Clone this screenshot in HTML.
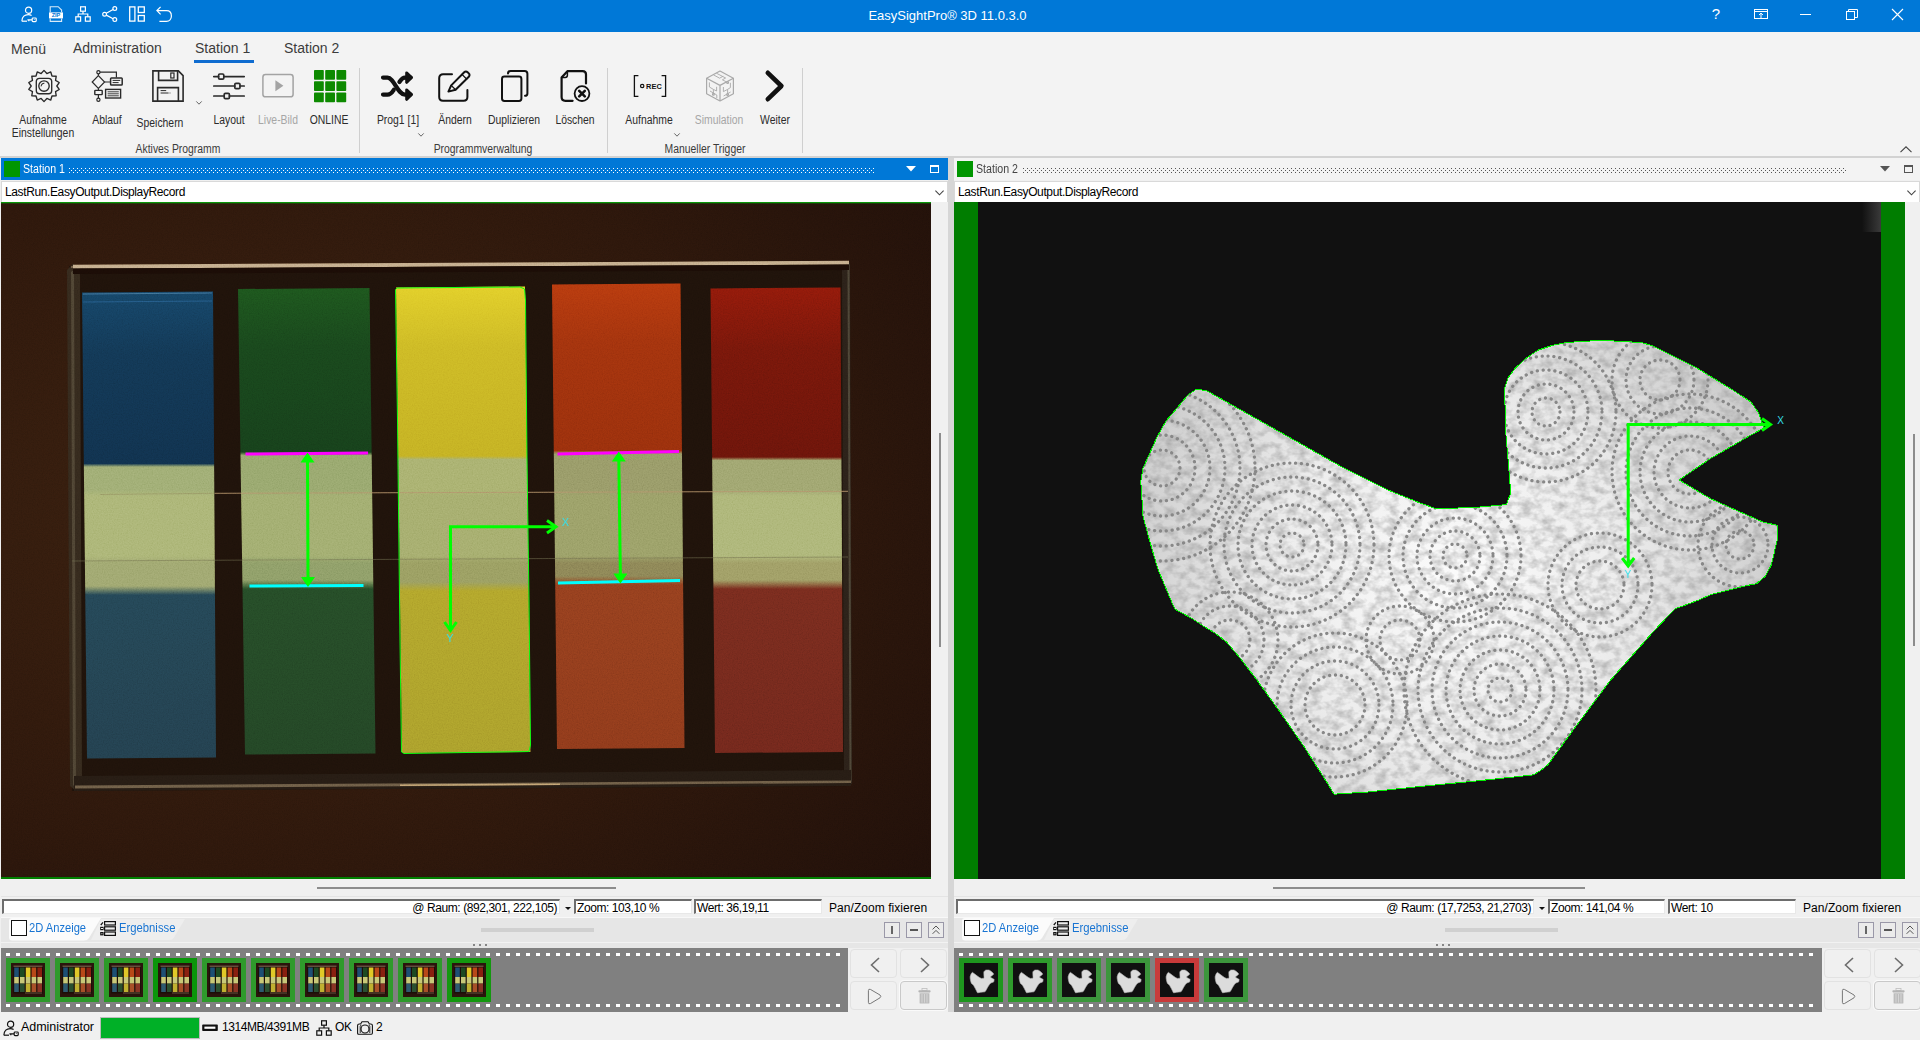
<!DOCTYPE html>
<html lang="de">
<head>
<meta charset="utf-8">
<title>EasySightPro 3D</title>
<style>
*{box-sizing:border-box;margin:0;padding:0}
html,body{width:1920px;height:1040px;overflow:hidden;background:#f0f0f0}
body{position:relative;font-family:"Liberation Sans",sans-serif;font-size:12px;color:#1e1e1e}
.abs{position:absolute}
svg{position:absolute;overflow:visible}
#title{left:0;top:0;width:1920px;height:32px;background:#0078d7}
#title .cap{left:0;top:8px;width:1895px;text-align:center;color:#fff;font-size:13px;line-height:16px}
#tabs{left:0;top:32px;width:1920px;height:32px;background:#f3f3f3}
#tabs span{position:absolute;top:8px;font-size:14px;line-height:16px;color:#3b3b3b;white-space:nowrap}
#ribbon{left:0;top:64px;width:1920px;height:92px;background:#f3f3f3}
.rl{position:absolute;white-space:nowrap;font-size:12px;line-height:13px;color:#2b2b2b;text-align:center;transform:translateX(-50%) scaleX(0.865)}
.rl.dis{color:#a6a6a6}
.gl{position:absolute;white-space:nowrap;font-size:12px;line-height:14px;color:#3b3b3b;transform:translateX(-50%) scaleX(0.865)}
.sep{position:absolute;top:4px;width:1px;height:85px;background:#cfcfcf}
.ui{font-family:"Liberation Sans",sans-serif;font-size:12px;letter-spacing:-0.42px;color:#000;white-space:nowrap}
.hdr{height:22px;top:158px}
.hdr .sq{position:absolute;left:3px;top:3px;width:16px;height:16px;background:#009600}
.hdr .t{position:absolute;top:4px;font-size:12px;line-height:14px;white-space:nowrap}
.dd{top:181px;height:21px;background:#fff;border:1px solid #d9d9d9;border-bottom:none}
.dd .t{position:absolute;left:3px;top:3px;line-height:14px}
.film{background:#808080;top:948px;height:64px}
.th{position:absolute;top:10px;width:44px;height:44px;background:#2d9a2a;overflow:hidden}
.btn{position:absolute;width:47px;height:29px;border:1px solid #e2e2e2;border-radius:4px;background:#f0f0f0}
.sb{position:absolute;top:922px;width:16px;height:16px;border:1px solid #9a98a8;background:#ebebeb}
.box{position:absolute;top:899px;height:15px;background:#fff;border-top:2px solid #6d6d6d;border-left:2px solid #6d6d6d;border-right:1px solid #e8e8e8;border-bottom:1px solid #e8e8e8}
.box span,.lbl{position:absolute;top:0.5px;line-height:13px}
</style>
</head>
<body>
<div id="title" class="abs">
 <svg style="left:21px;top:6px" width="16" height="16" viewBox="0 0 16 16" fill="none" stroke="#fff" stroke-width="1.2"><circle cx="7.6" cy="4.2" r="3.1"/><path d="M0.9 15.2 C0.9 10.8 3.8 8.6 7.2 8.6 C8.6 8.6 9.8 9 10.6 9.6"/><path d="M0.9 15.2 H6"/><rect x="11.2" y="12" width="4" height="3.6" rx="0.8"/><path d="M11 13.8 H6.4 M7.8 13.8 V15.2 M13.4 13.5v.6"/></svg>
 <svg style="left:48px;top:6px" width="16" height="16" viewBox="0 0 16 16" fill="none" stroke="#fff" stroke-width="1.1"><path d="M2.2 6.2 V0.7 H10.2 L13.6 4 V6.2 M2.2 12.6 V15.4 H13.6 V12.6" opacity=".85"/><rect x="1" y="6.4" width="14" height="6" fill="#fff" stroke="none"/><text x="8" y="11.4" font-family="Liberation Sans,sans-serif" font-size="5.6" font-weight="bold" fill="#0078d7" stroke="none" text-anchor="middle">ZIP</text></svg>
 <svg style="left:75px;top:6px" width="16" height="16" viewBox="0 0 16 16" fill="none" stroke="#fff" stroke-width="1.2"><rect x="5.6" y="0.8" width="4.8" height="4.4"/><rect x="0.8" y="10.8" width="4.8" height="4.4"/><rect x="10.4" y="10.8" width="4.8" height="4.4"/><path d="M8 5.2 V8 M3.2 10.8 V8 H12.8 V10.8"/></svg>
 <svg style="left:102px;top:6px" width="16" height="16" viewBox="0 0 16 16" fill="none" stroke="#fff" stroke-width="1.2"><circle cx="12.8" cy="2.6" r="1.9"/><circle cx="2.6" cy="8.2" r="1.9"/><circle cx="12.8" cy="13.6" r="1.9"/><path d="M4.3 7.3 L11.1 3.5 M4.3 9.1 L11.1 12.7"/></svg>
 <svg style="left:129px;top:6px" width="16" height="16" viewBox="0 0 16 16" fill="none" stroke="#fff" stroke-width="1.3"><rect x="0.7" y="0.9" width="5.2" height="14.2"/><rect x="9.3" y="0.9" width="6" height="5.6"/><rect x="9.3" y="9.5" width="6" height="5.6"/></svg>
 <svg style="left:156px;top:6px" width="16" height="16" viewBox="0 0 16 16" fill="none" stroke="#fff" stroke-width="1.2"><path d="M4.6 0.9 L0.9 4.6 L4.6 8.3 M0.9 4.6 H10.6 C13.6 4.6 15.4 6.8 15.4 9.9 C15.4 13 13.4 15.3 10.4 15.3 H3.4"/></svg>
 <div class="abs cap">EasySightPro® 3D 11.0.3.0</div>
 <div class="abs" style="left:1711px;top:5px;color:#fff;font-size:15px;line-height:18px;width:10px;text-align:center">?</div>
 <svg style="left:1754px;top:9px" width="14" height="10" viewBox="0 0 14 10" fill="none" stroke="#fff" stroke-width="1"><rect x="0.5" y="0.5" width="13" height="9"/><path d="M0.5 2.5 H13.5 M7 9 V4.2 M5 6 L7 4.2 L9 6"/></svg>
 <div class="abs" style="left:1800px;top:14px;width:11px;height:1px;background:#fff"></div>
 <svg style="left:1846px;top:9px" width="12" height="11" viewBox="0 0 12 11" fill="none" stroke="#fff" stroke-width="1"><rect x="0.5" y="2.5" width="8" height="8"/><path d="M2.5 2.5 V0.5 H11.5 V8.5 H8.5"/></svg>
 <svg style="left:1892px;top:9px" width="11" height="11" viewBox="0 0 11 11" fill="none" stroke="#fff" stroke-width="1.1"><path d="M0 0 L11 11 M11 0 L0 11"/></svg>
</div>

<div id="tabs" class="abs">
 <span style="left:11px;top:9px">Menü</span>
 <span style="left:73px">Administration</span>
 <span style="left:195px">Station 1</span>
 <span style="left:284px">Station 2</span>
 <div class="abs" style="left:194px;top:28px;width:60px;height:3px;background:#0f6cd0"></div>
</div>

<div id="ribbon" class="abs">
<svg style="left:28px;top:6px" width="32" height="32" viewBox="0 0 32 32" fill="none" stroke="#2a2a2a" stroke-width="1.35" stroke-linejoin="round"><path d="M16.00 0.40 L18.85 3.52 L22.77 1.94 L23.98 5.99 L28.20 6.27 L27.53 10.45 L31.21 12.53 L28.80 16.00 L31.21 19.47 L27.53 21.55 L28.20 25.73 L23.98 26.01 L22.77 30.06 L18.85 28.48 L16.00 31.60 L13.15 28.48 L9.23 30.06 L8.02 26.01 L3.80 25.73 L4.47 21.55 L0.79 19.47 L3.20 16.00 L0.79 12.53 L4.47 10.45 L3.80 6.27 L8.02 5.99 L9.23 1.94 L13.15 3.52Z"/><rect x="8.3" y="8.3" width="15.4" height="15.4" rx="3.2"/><circle cx="16" cy="16" r="5.2"/><path d="M13.2 16.4 A3 3 0 0 1 16.4 13.2" stroke-width="1.1"/></svg>
<svg style="left:91px;top:6px" width="32" height="32" viewBox="0 0 32 32" fill="none" stroke="#2a2a2a" stroke-width="1.2"><circle cx="7.4" cy="2.2" r="1.6"/><path d="M9 2.2 H25.4 V7.6 M7.4 3.8 V5.6 M7.4 18.4 V20.4 M7.4 24.6 V28.2 M13.6 12 H19.4"/><path d="M7.4 5.6 L13.6 12 L7.4 18.4 L1.2 12 Z"/><rect x="19.6" y="8" width="11.6" height="7" rx="0.8" stroke-width="1.5"/><path d="M21.6 10.4 H29.2 M21.6 12.6 H27.6" stroke-width="1"/><rect x="3.8" y="20.4" width="7.4" height="4.2" rx="0.6" stroke-width="1.4"/><circle cx="7.4" cy="29.8" r="1.6"/><rect x="14.6" y="19.4" width="15" height="8.6" stroke-width="1.4"/><path d="M16.6 21.8 H27.8 M16.6 23.8 H27.8 M16.6 25.8 H27.8" stroke-width="0.9"/></svg>
<svg style="left:152px;top:6px" width="32" height="32" viewBox="0 0 32 32" fill="none" stroke="#2a2a2a" stroke-width="1.6" stroke-linejoin="miter"><path d="M0.9 0.9 H26.4 L31.1 5.6 V31.1 H0.9 Z"/><path d="M6.6 0.9 V10.4 H25.6 V0.9"/><rect x="18.8" y="3" width="3.2" height="5" stroke-width="1.2"/><path d="M5.6 31 V17.6 H26.4 V31"/><path d="M8.6 20.6 H14.2 M8.6 23 H16.6 M17.6 23 H18.4" stroke-width="1"/></svg>
<svg style="left:196px;top:36.5px" width="6" height="4" viewBox="0 0 6 4" fill="none" stroke="#555" stroke-width="0.9"><path d="M0.3 0.4 L3 3.2 L5.7 0.4"/></svg>
<svg style="left:213px;top:6px" width="32" height="32" viewBox="0 0 32 32" fill="none" stroke="#2a2a2a" stroke-width="1.7" stroke-linecap="round"><path d="M0.8 6.6 H5.6 M10.8 6.6 H31.2 M0.8 16 H21.8 M27 16 H31.2 M0.8 26 H11.2 M16.4 26 H31.2"/><rect x="5.6" y="4" width="5.2" height="5.2" rx="1.2"/><rect x="21.8" y="13.4" width="5.2" height="5.2" rx="1.2"/><rect x="11.2" y="23.4" width="5.2" height="5.2" rx="1.2"/></svg>
<svg style="left:262px;top:6px" width="32" height="32" viewBox="0 0 32 32" fill="none" stroke="#a3a3a3" stroke-width="1.5"><rect x="0.9" y="4.6" width="30.2" height="22.2" rx="2.6"/><path d="M13.4 10.2 L21.4 15.7 L13.4 21.2 Z" fill="#a3a3a3" stroke="none"/></svg>
<svg style="left:314px;top:6px" width="32" height="32" viewBox="0 0 32 32" fill="#0d8a00"><rect x="0.0" y="0.0" width="9.8" height="9.8" rx="0.8"/><rect x="11.2" y="0.0" width="9.8" height="9.8" rx="0.8"/><rect x="22.4" y="0.0" width="9.8" height="9.8" rx="0.8"/><rect x="0.0" y="11.2" width="9.8" height="9.8" rx="0.8"/><rect x="11.2" y="11.2" width="9.8" height="9.8" rx="0.8"/><rect x="22.4" y="11.2" width="9.8" height="9.8" rx="0.8"/><rect x="0.0" y="22.4" width="9.8" height="9.8" rx="0.8"/><rect x="11.2" y="22.4" width="9.8" height="9.8" rx="0.8"/><rect x="22.4" y="22.4" width="9.8" height="9.8" rx="0.8"/></svg>
<svg style="left:381px;top:6px" width="33" height="32" viewBox="0 0 33 32" fill="none" stroke="#111" stroke-width="4.2" stroke-linecap="round" stroke-linejoin="round"><path d="M2 7.6 H6.5 C13 7.6 16.5 24.6 24 24.6 H29.5"/><path d="M2 24.6 H6.5 C9.2 24.6 11 22.6 12.8 19.8 M18.4 12 C20 9.6 21.6 7.6 24 7.6 H29.5"/><path d="M25.6 2.8 L30.6 7.6 L25.6 12.4 Z M25.6 19.8 L30.6 24.6 L25.6 29.4 Z" fill="#111" stroke-width="2.8"/></svg>
<svg style="left:418px;top:68.5px" width="6" height="4" viewBox="0 0 6 4" fill="none" stroke="#555" stroke-width="0.9"><path d="M0.3 0.4 L3 3.2 L5.7 0.4"/></svg>
<svg style="left:438px;top:6px" width="33" height="32" viewBox="0 0 33 32" fill="none" stroke="#111" stroke-width="2" stroke-linecap="round" stroke-linejoin="round"><path d="M14 4.2 H5 C2.8 4.2 1.2 5.8 1.2 8 V27 C1.2 29.2 2.8 30.8 5 30.8 H25.6 C27.8 30.8 29.4 29.2 29.4 27 V20"/><path d="M10.4 21.6 L13.2 15.4 L26.2 2.2 C27.2 1.2 28.6 1.2 29.6 2.2 L30.8 3.4 C31.8 4.4 31.8 5.8 30.8 6.8 L17.6 19.8 Z"/><path d="M13.2 15.4 L17.6 19.8 M24 4.4 L28.6 9" stroke-width="1.3"/></svg>
<svg style="left:501px;top:6px" width="28" height="32" viewBox="0 0 28 32" fill="none" stroke="#111" stroke-width="2" stroke-linejoin="round" stroke-linecap="round"><rect x="1" y="6.6" width="19.4" height="24.4" rx="2.4"/><path d="M7 3.6 C7 2 8 1 9.6 1 H23.6 C25.4 1 26.4 2 26.4 3.8 V23.4 C26.4 25 25.6 25.8 24 25.8"/></svg>
<svg style="left:560px;top:6px" width="32" height="32" viewBox="0 0 32 32" fill="none" stroke="#111" stroke-width="2.2" stroke-linejoin="round" stroke-linecap="round"><path d="M12.6 30.8 H5.4 C3.2 30.8 1.6 29.2 1.6 27 V7.6 L7.4 1.2 H22.6 C24.6 1.2 26 2.6 26 4.6 V13.4"/><path d="M1.8 7.4 H5.2 C6.6 7.4 7.4 6.6 7.4 5.2 V1.4" stroke-width="1.5"/><circle cx="22" cy="23.6" r="7.4" stroke-width="1.8"/><path d="M19.2 20.8 L24.8 26.4 M24.8 20.8 L19.2 26.4" stroke-width="2.6"/></svg>
<svg style="left:633px;top:6px" width="34" height="32" viewBox="0 0 34 32" fill="none" stroke="#111" stroke-width="1.3"><path d="M5.4 5.6 H1.4 V26.4 H5.4 M28.6 5.6 H32.6 V26.4 H28.6"/><circle cx="9.2" cy="16" r="1.7" stroke-width="1.2"/><text x="13" y="18.9" font-family="Liberation Sans,sans-serif" font-size="7.4" font-weight="bold" fill="#111" stroke="none" letter-spacing="0.1">REC</text></svg>
<svg style="left:673.5px;top:68.5px" width="6" height="4" viewBox="0 0 6 4" fill="none" stroke="#555" stroke-width="0.9"><path d="M0.3 0.4 L3 3.2 L5.7 0.4"/></svg>
<svg style="left:705px;top:6px" width="30" height="32" viewBox="0 0 30 32" fill="none" stroke="#a9a9a9" stroke-width="1.2" stroke-linejoin="round"><path d="M15 1 L28.4 8.2 V23.8 L15 31 L1.6 23.8 V8.2 Z"/><path d="M1.6 8.2 L15 15.4 L28.4 8.2 M15 15.4 V31"/><path d="M8.4 4.8 L14.6 8.2 L18.2 6.2 M11.4 3.2 L20.6 8 L17.4 9.8 L22 12.2" stroke-width="0.9"/><path d="M4.4 12.4 V17 L8.4 19.4 V23.4 M11.6 16.8 V21 L8.4 19.4 M5 21 L11.8 25 V28" stroke-width="0.9"/><path d="M18.4 17 V21.6 L22.6 19.4 V23.6 M25.4 12.8 V17.6 L22.6 19.4 M18.6 26 L25.6 22" stroke-width="0.9"/><circle cx="8.4" cy="24.2" r="0.9"/><circle cx="22.6" cy="24.4" r="0.9"/><circle cx="22.6" cy="12.6" r="0.9"/></svg>
<svg style="left:765px;top:6px" width="20" height="32" viewBox="0 0 20 32" fill="none" stroke="#111" stroke-width="4.6" stroke-linecap="round" stroke-linejoin="round"><path d="M2.8 2.8 L16.4 16 L2.8 29.2"/></svg>
<div class="rl" style="left:43px;top:50px">Aufnahme<br>Einstellungen</div>
<div class="rl" style="left:106.5px;top:50px">Ablauf</div>
<div class="rl" style="left:159.5px;top:53px">Speichern</div>
<div class="rl" style="left:228.5px;top:50px">Layout</div>
<div class="rl dis" style="left:277.5px;top:50px">Live-Bild</div>
<div class="rl" style="left:328.5px;top:50px">ONLINE</div>
<div class="rl" style="left:397.5px;top:50px">Prog1 [1]</div>
<div class="rl" style="left:454.5px;top:50px">Ändern</div>
<div class="rl" style="left:513.5px;top:50px">Duplizieren</div>
<div class="rl" style="left:575px;top:50px">Löschen</div>
<div class="rl" style="left:648.5px;top:50px">Aufnahme</div>
<div class="rl dis" style="left:719px;top:50px">Simulation</div>
<div class="rl" style="left:774.5px;top:50px">Weiter</div>
<div class="gl" style="left:178px;top:78px">Aktives Programm</div>
<div class="gl" style="left:483px;top:78px">Programmverwaltung</div>
<div class="gl" style="left:705px;top:78px">Manueller Trigger</div>
<div class="sep" style="left:359px"></div><div class="sep" style="left:607px"></div><div class="sep" style="left:802px"></div><svg style="left:1900px;top:82px" width="12" height="7" viewBox="0 0 12 7" fill="none" stroke="#444" stroke-width="1.1"><path d="M0.5 6.2 L6 0.8 L11.5 6.2"/></svg>
</div>
<div class="abs" style="left:0;top:156px;width:1920px;height:2px;background:#d2d2d2"></div>

<!--IMG1S--><svg style="left:1px;top:202px" width="930" height="677" viewBox="0 0 930 677">
<defs>
<filter id="nz" x="0" y="0" width="100%" height="100%"><feTurbulence type="fractalNoise" baseFrequency="0.8" numOctaves="2" seed="3"/><feColorMatrix type="matrix" values="1 0 0 0 0  1 0 0 0 0  1 0 0 0 0  0 0 0 0 1"/></filter>
<radialGradient id="bg1" cx="0.3" cy="0.45" r="0.9"><stop offset="0" stop-color="#39200f"/><stop offset="0.6" stop-color="#2b160b"/><stop offset="1" stop-color="#1f0f09"/></radialGradient>
<clipPath id="c1"><rect width="930" height="677"/></clipPath>
</defs>
<g clip-path="url(#c1)">
<rect width="930" height="677" fill="url(#bg1)"/>
<path d="M68.0 64.0 L848.0 60.0 L850.0 584.0 L71.0 589.0Z" fill="#1e120a"/>
<path d="M66.0 68.0 L72.0 62.0 L79.0 66.0 L81.0 580.0 L74.0 588.0 L69.0 584.0Z" fill="#33281c"/>
<path d="M70.0 70.0 L73.0 68.0 L75.0 582.0 L72.0 584.0Z" fill="#4c4232"/>
<path d="M841.0 64.0 L849.0 60.0 L851.0 582.0 L843.0 584.0Z" fill="#2a2018"/>
<path d="M846.5 64.0 L848.5 62.0 L850.5 580.0 L848.5 582.0Z" fill="#4a4234"/>
<path d="M70.0 64.0 L848.0 59.0 L848.0 61.0 L70.0 66.0Z" fill="#6a5640"/>
<path d="M72.0 62.8 L848.0 58.8 L848.0 62.6 L72.0 66.6Z" fill="#c2aa88"/>
<path d="M72.0 66.6 L848.0 62.6 L848.0 68.0 L72.0 72.0Z" fill="#1a0c06"/>
<path d="M73.0 574.0 L850.0 568.0 L850.0 584.0 L73.0 589.0Z" fill="#251b13"/>
<path d="M74.0 583.5 L850.0 578.5 L850.0 581.0 L74.0 586.5Z" fill="#6a5a44"/>
<path d="M399.0 582.5 L559.0 581.5 L559.0 583.0 L399.0 584.0Z" fill="#c0a070"/>
<linearGradient id="sb" gradientUnits="userSpaceOnUse" x1="0" y1="90.5" x2="0" y2="556.5"><stop offset="0.0000" stop-color="#154364"/><stop offset="0.1299" stop-color="#123652"/><stop offset="0.3670" stop-color="#10304b"/><stop offset="0.3745" stop-color="#9caa70"/><stop offset="0.4238" stop-color="#9caa70"/><stop offset="0.4367" stop-color="#a8b272"/><stop offset="0.5655" stop-color="#a8b272"/><stop offset="0.5805" stop-color="#9ca46c"/><stop offset="0.6298" stop-color="#9ca46c"/><stop offset="0.6491" stop-color="#234453"/><stop offset="1.0000" stop-color="#223e4c"/></linearGradient>
<path d="M81.0 90.5 L212.0 89.5 L215.0 555.5 L86.0 556.5Z" fill="url(#sb)"/>
<linearGradient id="sg" gradientUnits="userSpaceOnUse" x1="0" y1="87" x2="0" y2="552.5"><stop offset="0.0000" stop-color="#1c521c"/><stop offset="0.1241" stop-color="#18441b"/><stop offset="0.3502" stop-color="#163e1a"/><stop offset="0.3577" stop-color="#94a46a"/><stop offset="0.4318" stop-color="#94a46a"/><stop offset="0.4447" stop-color="#9eaa6c"/><stop offset="0.5736" stop-color="#9eaa6c"/><stop offset="0.5886" stop-color="#8a9a64"/><stop offset="0.6251" stop-color="#8a9a64"/><stop offset="0.6445" stop-color="#244926"/><stop offset="1.0000" stop-color="#224324"/></linearGradient>
<path d="M237.0 87.0 L368.5 86.0 L374.5 551.5 L244.0 552.5Z" fill="url(#sg)"/>
<linearGradient id="sy" gradientUnits="userSpaceOnUse" x1="0" y1="85.5" x2="0" y2="551"><stop offset="0.0000" stop-color="#e0cc28"/><stop offset="0.1282" stop-color="#cbb724"/><stop offset="0.3620" stop-color="#c2ae22"/><stop offset="0.3695" stop-color="#a6ae6c"/><stop offset="0.4350" stop-color="#a6ae6c"/><stop offset="0.4479" stop-color="#a2aa6a"/><stop offset="0.5768" stop-color="#a2aa6a"/><stop offset="0.5918" stop-color="#969a5e"/><stop offset="0.6327" stop-color="#969a5e"/><stop offset="0.6520" stop-color="#afa22a"/><stop offset="1.0000" stop-color="#a89c2a"/></linearGradient>
<path d="M395.0 85.5 L524.0 84.5 L529.5 550.0 L401.0 551.0Z" fill="url(#sy)"/>
<linearGradient id="so" gradientUnits="userSpaceOnUse" x1="0" y1="82.5" x2="0" y2="547"><stop offset="0.0000" stop-color="#b4380e"/><stop offset="0.1266" stop-color="#9f310d"/><stop offset="0.3574" stop-color="#962e0c"/><stop offset="0.3649" stop-color="#949664"/><stop offset="0.4424" stop-color="#949664"/><stop offset="0.4553" stop-color="#979c64"/><stop offset="0.5845" stop-color="#979c64"/><stop offset="0.5996" stop-color="#888153"/><stop offset="0.6276" stop-color="#888153"/><stop offset="0.6469" stop-color="#913d1d"/><stop offset="1.0000" stop-color="#8b381a"/></linearGradient>
<path d="M551.0 82.5 L679.5 81.5 L683.5 546.0 L556.0 547.0Z" fill="url(#so)"/>
<linearGradient id="sr" gradientUnits="userSpaceOnUse" x1="0" y1="86.5" x2="0" y2="551"><stop offset="0.0000" stop-color="#8c190a"/><stop offset="0.1285" stop-color="#73160a"/><stop offset="0.3628" stop-color="#68140a"/><stop offset="0.3703" stop-color="#9ca26c"/><stop offset="0.4338" stop-color="#9ca26c"/><stop offset="0.4467" stop-color="#aab374"/><stop offset="0.5759" stop-color="#aab374"/><stop offset="0.5910" stop-color="#9c9a62"/><stop offset="0.6276" stop-color="#9c9a62"/><stop offset="0.6469" stop-color="#742a1d"/><stop offset="1.0000" stop-color="#6e261b"/></linearGradient>
<path d="M709.5 86.5 L839.5 85.5 L842.0 550.0 L714.0 551.0Z" fill="url(#sr)"/>
<path d="M82.0 92.0 L211.0 91.0" stroke="#4a7ca0" stroke-width="1.2" opacity="0.8"/><path d="M82.0 100.0 L211.0 99.0" stroke="#2c6494" stroke-width="1" opacity="0.7"/>
<path d="M214.0 291.3 L847.0 289.3" stroke="#b09068" stroke-width="1" opacity="0.85"/>
<path d="M99.0 292.5 L214.0 291.3" stroke="#8c8458" stroke-width="1" opacity="0.5"/>
<path d="M71.0 359.0 L847.0 355.0" stroke="#6c6a4c" stroke-width="1" opacity="0.55"/>
<rect width="930" height="677" filter="url(#nz)" opacity="0.16" style="mix-blend-mode:overlay"/>
<path d="M394.5 87.5 L396.0 86.0 L519.0 85.0 L523.5 87.0 L524.5 98.0 L526.0 258.0 L528.0 398.0 L529.5 543.0 L528.0 549.5 L403.0 551.5 L400.5 550.0 L399.0 438.0 L396.5 218.0 Z" fill="none" stroke="#10ff10" stroke-width="1"/>
<path d="M244.5 252.0 L367.0 251.0" stroke="#ff00ff" stroke-width="3"/>
<path d="M248.5 384.0 L362.5 383.5" stroke="#00ffff" stroke-width="3"/>
<path d="M556.5 252.0 L678.0 249.5" stroke="#ff00ff" stroke-width="3"/>
<path d="M557.0 381.0 L679.0 378.5" stroke="#00ffff" stroke-width="3"/>
<path d="M306.5 256.5 L307.0 379.0" stroke="#00ff00" stroke-width="3"/><path d="M306.5 250.5 L299.5 260.5 L313.5 260.5Z M307.0 385.0 L300.0 375.0 L314.0 375.0Z" fill="#00ff00"/>
<path d="M617.8 255.5 L619.4 375.5" stroke="#00ff00" stroke-width="3"/><path d="M617.8 249.5 L610.8 259.5 L624.8 259.5Z M619.4 381.5 L612.4 371.5 L626.4 371.5Z" fill="#00ff00"/>
<path d="M553.0 324.7 L449.5 324.7 L449.5 426.0" fill="none" stroke="#00ff00" stroke-width="3" stroke-linejoin="miter"/>
<path d="M546.0 318.5 L555.0 324.7 L546.0 331.0 M443.5 420.0 L449.5 428.5 L455.5 420.0" fill="none" stroke="#00ff00" stroke-width="3"/>
<text x="564.5" y="323.5" font-family="Liberation Sans,sans-serif" font-size="11" fill="#35dfe8" text-anchor="middle">X</text>
<text x="449" y="440" font-family="Liberation Sans,sans-serif" font-size="11" fill="#35dfe8" text-anchor="middle">Y</text>
<rect x="0" y="0" width="930" height="1.3" fill="#0a960a"/><rect x="0" y="675" width="930" height="2" fill="#008000"/>
</g></svg><!--IMG1E-->
<div class="abs hdr" style="left:1px;width:947px;background:#0078d7">
 <div class="sq"></div><div class="t" style="left:21.5px;color:#fff;transform-origin:0 50%;transform:scaleX(0.886)">Station 1</div>
 <svg style="left:68px;top:10px" width="805" height="5"><defs><pattern id="dp1" width="4" height="4" patternUnits="userSpaceOnUse"><rect x="0" y="0" width="1" height="1" fill="#fff"/><rect x="2" y="2" width="1" height="1" fill="#fff"/></pattern></defs><rect width="805" height="5" fill="url(#dp1)"/></svg>
 <svg style="left:905px;top:8px" width="10" height="6" viewBox="0 0 10 6"><path d="M0 0 H10 L5 5.6 Z" fill="#fff"/></svg>
 <div class="abs" style="left:929px;top:7px;width:9px;height:8px;border:1px solid #fff;border-top-width:2px"></div>
</div>
<div class="abs dd" style="left:1px;width:947px"><div class="t ui" style="letter-spacing:-0.38px">LastRun.EasyOutput.DisplayRecord</div>
 <svg style="left:933px;top:8px" width="9" height="6" viewBox="0 0 9 6" fill="none" stroke="#444" stroke-width="1.1"><path d="M0.4 0.6 L4.5 4.8 L8.6 0.6"/></svg></div>
<div class="abs" style="left:939px;top:433px;width:2px;height:214px;background:#8c8c8c"></div>
<div class="abs" style="left:317px;top:887px;width:299px;height:2px;background:#8c8c8c"></div>
<div class="abs" style="left:1px;top:896px;width:947px;height:1px;background:#e4e4e4"></div>
<div class="box" style="left:2px;width:558px"><span class="ui" style="right:2px">@ Raum: (892,301, 222,105)</span></div>
<svg style="left:565px;top:907px" width="6" height="3" viewBox="0 0 6 3"><path d="M0 0 H6 L3 3 Z" fill="#111"/></svg>
<div class="box" style="left:574px;width:118px"><span class="ui" style="left:1px">Zoom: 103,10 %</span></div>
<div class="box" style="left:694px;width:128px"><span class="ui" style="left:1px">Wert: 36,19,11</span></div>
<div class="lbl ui" style="left:829px;top:902px;letter-spacing:0.05px">Pan/Zoom fixieren</div>
<div class="abs" style="left:1px;top:917px;width:947px;height:26px;background:#e6e6e6;border-top:1px solid #f8f8f8"></div>
<svg style="left:9px;top:918px" width="190" height="23" viewBox="0 0 190 23"><path d="M3 0 H92 L80 20 Q78.5 22.5 75 22.5 H3 Q0 22.5 0 19.5 V3 Q0 0 3 0Z" fill="#fbfbfb"/><path d="M92 1 H176 L165 19.5 Q163.5 22 160 22 H82 Z" fill="#eeeeee"/></svg>
<div class="abs" style="left:11px;top:920px;width:16px;height:16px;background:#fff;border:1px solid #111"></div>
<div class="abs ui" style="left:29px;top:921px;line-height:14px;color:#1874d2;letter-spacing:0;transform-origin:0 50%;transform:scaleX(0.93)">2D Anzeige</div>
<svg style="left:100px;top:920px" width="16" height="16" viewBox="0 0 16 16" fill="none" stroke="#111" stroke-width="1.2"><rect x="4.6" y="1.6" width="10.8" height="3.4"/><rect x="4.6" y="6.8" width="10.8" height="3.4"/><rect x="4.6" y="12" width="10.8" height="3.4"/><rect x="0.8" y="7.4" width="2.2" height="2.2"/><rect x="0.8" y="12.6" width="2.2" height="2.2"/><path d="M0.8 5 L3 2.4" /></svg>
<div class="abs ui" style="left:118.5px;top:921px;line-height:14px;color:#1874d2;letter-spacing:0;transform-origin:0 50%;transform:scaleX(0.94)">Ergebnisse</div>
<div class="abs" style="left:481px;top:928px;width:113px;height:4px;background:#d0d0d0"></div>
<div class="sb" style="left:884px"><div class="abs" style="left:6px;top:3px;width:1.5px;height:8px;background:#666"></div></div>
<div class="sb" style="left:906px"><div class="abs" style="left:3px;top:6px;width:8px;height:2px;background:#555"></div></div>
<div class="sb" style="left:928px"><svg style="left:3px;top:2px" width="8" height="10" viewBox="0 0 8 10" fill="none" stroke="#555" stroke-width="1"><path d="M0.6 4.4 L4 1 L7.4 4.4 M0.6 8.8 L4 5.4 L7.4 8.8"/></svg></div>
<div class="abs" style="left:1px;top:942px;width:947px;height:6px;background:#e6e6e6;border-top:1px solid #f2f2f2"></div>
<div class="abs" style="left:473px;top:944px;width:2px;height:2px;background:#666;border-radius:1px"></div>
<div class="abs" style="left:479px;top:944px;width:2px;height:2px;background:#666;border-radius:1px"></div>
<div class="abs" style="left:485px;top:944px;width:2px;height:2px;background:#666;border-radius:1px"></div>
<div class="abs film" style="left:1px;width:847px">
 <svg style="left:5px;top:5px" width="834" height="3"><defs><pattern id="fp1" width="10" height="3" patternUnits="userSpaceOnUse"><rect width="4" height="3" fill="#fff"/></pattern></defs><rect width="834" height="3" fill="url(#fp1)"/></svg>
 <svg style="left:5px;top:56px" width="834" height="3"><rect width="834" height="3" fill="url(#fp1)"/></svg>
<div class="th" style="left:5px;background:#2f9a2c"><svg style="left:5px;top:5px" width="34" height="34" viewBox="0 0 34 34"><rect width="34" height="34" fill="#2a140c"/><rect x="2" y="3" width="30" height="27.5" fill="#1c0e08"/><path d="M2.5 3.2 H31.5" stroke="#a08868" stroke-width="0.8"/><path d="M14 30 H31" stroke="#8a7458" stroke-width="0.7"/><rect x="3.2" y="4.5" width="4.6" height="9.5" fill="#1d4f74"/><rect x="3.2" y="14" width="4.6" height="6.6" fill="#c8c878"/><rect x="3.2" y="20.6" width="4.6" height="8.4" fill="#2d5a70"/><rect x="9.0" y="4.5" width="4.6" height="9.5" fill="#1d4a22"/><rect x="9.0" y="14" width="4.6" height="6.6" fill="#c8c878"/><rect x="9.0" y="20.6" width="4.6" height="8.4" fill="#2a5030"/><rect x="14.8" y="4.5" width="4.6" height="9.5" fill="#e0c828"/><rect x="14.8" y="14" width="4.6" height="6.6" fill="#c8c878"/><rect x="14.8" y="20.6" width="4.6" height="8.4" fill="#c0b030"/><rect x="20.6" y="4.5" width="4.6" height="9.5" fill="#b84818"/><rect x="20.6" y="14" width="4.6" height="6.6" fill="#c8c878"/><rect x="20.6" y="20.6" width="4.6" height="8.4" fill="#a85028"/><rect x="26.4" y="4.5" width="4.6" height="9.5" fill="#8a2010"/><rect x="26.4" y="14" width="4.6" height="6.6" fill="#c8c878"/><rect x="26.4" y="20.6" width="4.6" height="8.4" fill="#8a3424"/></svg></div>
<div class="th" style="left:54px;background:#2f9a2c"><svg style="left:5px;top:5px" width="34" height="34" viewBox="0 0 34 34"><rect width="34" height="34" fill="#2a140c"/><rect x="2" y="3" width="30" height="27.5" fill="#1c0e08"/><path d="M2.5 3.2 H31.5" stroke="#a08868" stroke-width="0.8"/><path d="M14 30 H31" stroke="#8a7458" stroke-width="0.7"/><rect x="3.2" y="4.5" width="4.6" height="9.5" fill="#1d4f74"/><rect x="3.2" y="14" width="4.6" height="6.6" fill="#c8c878"/><rect x="3.2" y="20.6" width="4.6" height="8.4" fill="#2d5a70"/><rect x="9.0" y="4.5" width="4.6" height="9.5" fill="#1d4a22"/><rect x="9.0" y="14" width="4.6" height="6.6" fill="#c8c878"/><rect x="9.0" y="20.6" width="4.6" height="8.4" fill="#2a5030"/><rect x="14.8" y="4.5" width="4.6" height="9.5" fill="#e0c828"/><rect x="14.8" y="14" width="4.6" height="6.6" fill="#c8c878"/><rect x="14.8" y="20.6" width="4.6" height="8.4" fill="#c0b030"/><rect x="20.6" y="4.5" width="4.6" height="9.5" fill="#b84818"/><rect x="20.6" y="14" width="4.6" height="6.6" fill="#c8c878"/><rect x="20.6" y="20.6" width="4.6" height="8.4" fill="#a85028"/><rect x="26.4" y="4.5" width="4.6" height="9.5" fill="#8a2010"/><rect x="26.4" y="14" width="4.6" height="6.6" fill="#c8c878"/><rect x="26.4" y="20.6" width="4.6" height="8.4" fill="#8a3424"/></svg></div>
<div class="th" style="left:103px;background:#2c9a28"><svg style="left:5px;top:5px" width="34" height="34" viewBox="0 0 34 34"><rect width="34" height="34" fill="#2a140c"/><rect x="2" y="3" width="30" height="27.5" fill="#1c0e08"/><path d="M2.5 3.2 H31.5" stroke="#a08868" stroke-width="0.8"/><path d="M14 30 H31" stroke="#8a7458" stroke-width="0.7"/><rect x="3.2" y="4.5" width="4.6" height="9.5" fill="#1d4f74"/><rect x="3.2" y="14" width="4.6" height="6.6" fill="#c8c878"/><rect x="3.2" y="20.6" width="4.6" height="8.4" fill="#2d5a70"/><rect x="9.0" y="4.5" width="4.6" height="9.5" fill="#1d4a22"/><rect x="9.0" y="14" width="4.6" height="6.6" fill="#c8c878"/><rect x="9.0" y="20.6" width="4.6" height="8.4" fill="#2a5030"/><rect x="14.8" y="4.5" width="4.6" height="9.5" fill="#e0c828"/><rect x="14.8" y="14" width="4.6" height="6.6" fill="#c8c878"/><rect x="14.8" y="20.6" width="4.6" height="8.4" fill="#c0b030"/><rect x="20.6" y="4.5" width="4.6" height="9.5" fill="#b84818"/><rect x="20.6" y="14" width="4.6" height="6.6" fill="#c8c878"/><rect x="20.6" y="20.6" width="4.6" height="8.4" fill="#a85028"/><rect x="26.4" y="4.5" width="4.6" height="9.5" fill="#8a2010"/><rect x="26.4" y="14" width="4.6" height="6.6" fill="#c8c878"/><rect x="26.4" y="20.6" width="4.6" height="8.4" fill="#8a3424"/></svg></div>
<div class="th" style="left:152px;background:#0a960a"><svg style="left:5px;top:5px" width="34" height="34" viewBox="0 0 34 34"><rect width="34" height="34" fill="#2a140c"/><rect x="2" y="3" width="30" height="27.5" fill="#1c0e08"/><path d="M2.5 3.2 H31.5" stroke="#a08868" stroke-width="0.8"/><path d="M14 30 H31" stroke="#8a7458" stroke-width="0.7"/><rect x="3.2" y="4.5" width="4.6" height="9.5" fill="#1d4f74"/><rect x="3.2" y="14" width="4.6" height="6.6" fill="#c8c878"/><rect x="3.2" y="20.6" width="4.6" height="8.4" fill="#2d5a70"/><rect x="9.0" y="4.5" width="4.6" height="9.5" fill="#1d4a22"/><rect x="9.0" y="14" width="4.6" height="6.6" fill="#c8c878"/><rect x="9.0" y="20.6" width="4.6" height="8.4" fill="#2a5030"/><rect x="14.8" y="4.5" width="4.6" height="9.5" fill="#e0c828"/><rect x="14.8" y="14" width="4.6" height="6.6" fill="#c8c878"/><rect x="14.8" y="20.6" width="4.6" height="8.4" fill="#c0b030"/><rect x="20.6" y="4.5" width="4.6" height="9.5" fill="#b84818"/><rect x="20.6" y="14" width="4.6" height="6.6" fill="#c8c878"/><rect x="20.6" y="20.6" width="4.6" height="8.4" fill="#a85028"/><rect x="26.4" y="4.5" width="4.6" height="9.5" fill="#8a2010"/><rect x="26.4" y="14" width="4.6" height="6.6" fill="#c8c878"/><rect x="26.4" y="20.6" width="4.6" height="8.4" fill="#8a3424"/></svg></div>
<div class="th" style="left:201px;background:#2f9a2c"><svg style="left:5px;top:5px" width="34" height="34" viewBox="0 0 34 34"><rect width="34" height="34" fill="#2a140c"/><rect x="2" y="3" width="30" height="27.5" fill="#1c0e08"/><path d="M2.5 3.2 H31.5" stroke="#a08868" stroke-width="0.8"/><path d="M14 30 H31" stroke="#8a7458" stroke-width="0.7"/><rect x="3.2" y="4.5" width="4.6" height="9.5" fill="#1d4f74"/><rect x="3.2" y="14" width="4.6" height="6.6" fill="#c8c878"/><rect x="3.2" y="20.6" width="4.6" height="8.4" fill="#2d5a70"/><rect x="9.0" y="4.5" width="4.6" height="9.5" fill="#1d4a22"/><rect x="9.0" y="14" width="4.6" height="6.6" fill="#c8c878"/><rect x="9.0" y="20.6" width="4.6" height="8.4" fill="#2a5030"/><rect x="14.8" y="4.5" width="4.6" height="9.5" fill="#e0c828"/><rect x="14.8" y="14" width="4.6" height="6.6" fill="#c8c878"/><rect x="14.8" y="20.6" width="4.6" height="8.4" fill="#c0b030"/><rect x="20.6" y="4.5" width="4.6" height="9.5" fill="#b84818"/><rect x="20.6" y="14" width="4.6" height="6.6" fill="#c8c878"/><rect x="20.6" y="20.6" width="4.6" height="8.4" fill="#a85028"/><rect x="26.4" y="4.5" width="4.6" height="9.5" fill="#8a2010"/><rect x="26.4" y="14" width="4.6" height="6.6" fill="#c8c878"/><rect x="26.4" y="20.6" width="4.6" height="8.4" fill="#8a3424"/></svg></div>
<div class="th" style="left:250px;background:#2f9a2c"><svg style="left:5px;top:5px" width="34" height="34" viewBox="0 0 34 34"><rect width="34" height="34" fill="#2a140c"/><rect x="2" y="3" width="30" height="27.5" fill="#1c0e08"/><path d="M2.5 3.2 H31.5" stroke="#a08868" stroke-width="0.8"/><path d="M14 30 H31" stroke="#8a7458" stroke-width="0.7"/><rect x="3.2" y="4.5" width="4.6" height="9.5" fill="#1d4f74"/><rect x="3.2" y="14" width="4.6" height="6.6" fill="#c8c878"/><rect x="3.2" y="20.6" width="4.6" height="8.4" fill="#2d5a70"/><rect x="9.0" y="4.5" width="4.6" height="9.5" fill="#1d4a22"/><rect x="9.0" y="14" width="4.6" height="6.6" fill="#c8c878"/><rect x="9.0" y="20.6" width="4.6" height="8.4" fill="#2a5030"/><rect x="14.8" y="4.5" width="4.6" height="9.5" fill="#e0c828"/><rect x="14.8" y="14" width="4.6" height="6.6" fill="#c8c878"/><rect x="14.8" y="20.6" width="4.6" height="8.4" fill="#c0b030"/><rect x="20.6" y="4.5" width="4.6" height="9.5" fill="#b84818"/><rect x="20.6" y="14" width="4.6" height="6.6" fill="#c8c878"/><rect x="20.6" y="20.6" width="4.6" height="8.4" fill="#a85028"/><rect x="26.4" y="4.5" width="4.6" height="9.5" fill="#8a2010"/><rect x="26.4" y="14" width="4.6" height="6.6" fill="#c8c878"/><rect x="26.4" y="20.6" width="4.6" height="8.4" fill="#8a3424"/></svg></div>
<div class="th" style="left:299px;background:#2f9a2c"><svg style="left:5px;top:5px" width="34" height="34" viewBox="0 0 34 34"><rect width="34" height="34" fill="#2a140c"/><rect x="2" y="3" width="30" height="27.5" fill="#1c0e08"/><path d="M2.5 3.2 H31.5" stroke="#a08868" stroke-width="0.8"/><path d="M14 30 H31" stroke="#8a7458" stroke-width="0.7"/><rect x="3.2" y="4.5" width="4.6" height="9.5" fill="#1d4f74"/><rect x="3.2" y="14" width="4.6" height="6.6" fill="#c8c878"/><rect x="3.2" y="20.6" width="4.6" height="8.4" fill="#2d5a70"/><rect x="9.0" y="4.5" width="4.6" height="9.5" fill="#1d4a22"/><rect x="9.0" y="14" width="4.6" height="6.6" fill="#c8c878"/><rect x="9.0" y="20.6" width="4.6" height="8.4" fill="#2a5030"/><rect x="14.8" y="4.5" width="4.6" height="9.5" fill="#e0c828"/><rect x="14.8" y="14" width="4.6" height="6.6" fill="#c8c878"/><rect x="14.8" y="20.6" width="4.6" height="8.4" fill="#c0b030"/><rect x="20.6" y="4.5" width="4.6" height="9.5" fill="#b84818"/><rect x="20.6" y="14" width="4.6" height="6.6" fill="#c8c878"/><rect x="20.6" y="20.6" width="4.6" height="8.4" fill="#a85028"/><rect x="26.4" y="4.5" width="4.6" height="9.5" fill="#8a2010"/><rect x="26.4" y="14" width="4.6" height="6.6" fill="#c8c878"/><rect x="26.4" y="20.6" width="4.6" height="8.4" fill="#8a3424"/></svg></div>
<div class="th" style="left:348px;background:#2f9a2c"><svg style="left:5px;top:5px" width="34" height="34" viewBox="0 0 34 34"><rect width="34" height="34" fill="#2a140c"/><rect x="2" y="3" width="30" height="27.5" fill="#1c0e08"/><path d="M2.5 3.2 H31.5" stroke="#a08868" stroke-width="0.8"/><path d="M14 30 H31" stroke="#8a7458" stroke-width="0.7"/><rect x="3.2" y="4.5" width="4.6" height="9.5" fill="#1d4f74"/><rect x="3.2" y="14" width="4.6" height="6.6" fill="#c8c878"/><rect x="3.2" y="20.6" width="4.6" height="8.4" fill="#2d5a70"/><rect x="9.0" y="4.5" width="4.6" height="9.5" fill="#1d4a22"/><rect x="9.0" y="14" width="4.6" height="6.6" fill="#c8c878"/><rect x="9.0" y="20.6" width="4.6" height="8.4" fill="#2a5030"/><rect x="14.8" y="4.5" width="4.6" height="9.5" fill="#e0c828"/><rect x="14.8" y="14" width="4.6" height="6.6" fill="#c8c878"/><rect x="14.8" y="20.6" width="4.6" height="8.4" fill="#c0b030"/><rect x="20.6" y="4.5" width="4.6" height="9.5" fill="#b84818"/><rect x="20.6" y="14" width="4.6" height="6.6" fill="#c8c878"/><rect x="20.6" y="20.6" width="4.6" height="8.4" fill="#a85028"/><rect x="26.4" y="4.5" width="4.6" height="9.5" fill="#8a2010"/><rect x="26.4" y="14" width="4.6" height="6.6" fill="#c8c878"/><rect x="26.4" y="20.6" width="4.6" height="8.4" fill="#8a3424"/></svg></div>
<div class="th" style="left:397px;background:#2f9a2c"><svg style="left:5px;top:5px" width="34" height="34" viewBox="0 0 34 34"><rect width="34" height="34" fill="#2a140c"/><rect x="2" y="3" width="30" height="27.5" fill="#1c0e08"/><path d="M2.5 3.2 H31.5" stroke="#a08868" stroke-width="0.8"/><path d="M14 30 H31" stroke="#8a7458" stroke-width="0.7"/><rect x="3.2" y="4.5" width="4.6" height="9.5" fill="#1d4f74"/><rect x="3.2" y="14" width="4.6" height="6.6" fill="#c8c878"/><rect x="3.2" y="20.6" width="4.6" height="8.4" fill="#2d5a70"/><rect x="9.0" y="4.5" width="4.6" height="9.5" fill="#1d4a22"/><rect x="9.0" y="14" width="4.6" height="6.6" fill="#c8c878"/><rect x="9.0" y="20.6" width="4.6" height="8.4" fill="#2a5030"/><rect x="14.8" y="4.5" width="4.6" height="9.5" fill="#e0c828"/><rect x="14.8" y="14" width="4.6" height="6.6" fill="#c8c878"/><rect x="14.8" y="20.6" width="4.6" height="8.4" fill="#c0b030"/><rect x="20.6" y="4.5" width="4.6" height="9.5" fill="#b84818"/><rect x="20.6" y="14" width="4.6" height="6.6" fill="#c8c878"/><rect x="20.6" y="20.6" width="4.6" height="8.4" fill="#a85028"/><rect x="26.4" y="4.5" width="4.6" height="9.5" fill="#8a2010"/><rect x="26.4" y="14" width="4.6" height="6.6" fill="#c8c878"/><rect x="26.4" y="20.6" width="4.6" height="8.4" fill="#8a3424"/></svg></div>
<div class="th" style="left:446px;background:#14980f"><svg style="left:5px;top:5px" width="34" height="34" viewBox="0 0 34 34"><rect width="34" height="34" fill="#2a140c"/><rect x="2" y="3" width="30" height="27.5" fill="#1c0e08"/><path d="M2.5 3.2 H31.5" stroke="#a08868" stroke-width="0.8"/><path d="M14 30 H31" stroke="#8a7458" stroke-width="0.7"/><rect x="3.2" y="4.5" width="4.6" height="9.5" fill="#1d4f74"/><rect x="3.2" y="14" width="4.6" height="6.6" fill="#c8c878"/><rect x="3.2" y="20.6" width="4.6" height="8.4" fill="#2d5a70"/><rect x="9.0" y="4.5" width="4.6" height="9.5" fill="#1d4a22"/><rect x="9.0" y="14" width="4.6" height="6.6" fill="#c8c878"/><rect x="9.0" y="20.6" width="4.6" height="8.4" fill="#2a5030"/><rect x="14.8" y="4.5" width="4.6" height="9.5" fill="#e0c828"/><rect x="14.8" y="14" width="4.6" height="6.6" fill="#c8c878"/><rect x="14.8" y="20.6" width="4.6" height="8.4" fill="#c0b030"/><rect x="20.6" y="4.5" width="4.6" height="9.5" fill="#b84818"/><rect x="20.6" y="14" width="4.6" height="6.6" fill="#c8c878"/><rect x="20.6" y="20.6" width="4.6" height="8.4" fill="#a85028"/><rect x="26.4" y="4.5" width="4.6" height="9.5" fill="#8a2010"/><rect x="26.4" y="14" width="4.6" height="6.6" fill="#c8c878"/><rect x="26.4" y="20.6" width="4.6" height="8.4" fill="#8a3424"/></svg></div>
</div>
<div class="btn" style="left:850px;top:949px"><svg style="left:19px;top:7px" width="10" height="16" viewBox="0 0 10 16" fill="none" stroke="#6d6d6d" stroke-width="1.6"><path d="M9 1 L1.5 8 L9 15"/></svg></div>
<div class="btn" style="left:900px;top:949px"><svg style="left:19px;top:7px" width="10" height="16" viewBox="0 0 10 16" fill="none" stroke="#6d6d6d" stroke-width="1.6"><path d="M1 1 L8.5 8 L1 15"/></svg></div>
<div class="btn" style="left:850px;top:981px"><svg style="left:16px;top:6px" width="15" height="17" viewBox="0 0 15 17" fill="none" stroke="#777" stroke-width="1" stroke-linejoin="round"><path d="M1.4 2.6 Q1.4 0.6 3.4 1.4 L13 7 Q14.6 8.4 13 9.8 L3.4 15.6 Q1.4 16.4 1.4 14.4 Z"/></svg></div>
<div class="btn" style="left:900px;top:981px;border-color:#c9c9c9;box-shadow:0 0 0 1px #fafafa"><svg style="left:17px;top:6px" width="13" height="16" viewBox="0 0 13 16"><rect x="4" y="0.4" width="5" height="2" fill="none" stroke="#bdbdbd" stroke-width="0.8"/><rect x="0.4" y="2.2" width="12.2" height="2.2" rx="0.8" fill="#b4b4b4"/><path d="M1.6 5.2 H11.4 V15 Q11.4 15.6 10.8 15.6 H2.2 Q1.6 15.6 1.6 15 Z" fill="#bcbcbc"/><path d="M4 6 V14.6 M6.5 6 V14.6 M9 6 V14.6" stroke="#d8d8d8" stroke-width="0.9"/></svg></div>

<div class="abs" style="left:948px;top:158px;width:6px;height:854px;background:#d6d6d6"></div>
<!--IMG2S--><svg style="left:954px;top:202px" width="951" height="677" viewBox="0 0 951 677">
<defs>
<clipPath id="bc"><path d="M242.4 187.2 L252.5 188.6 L318.8 226.0 L388.0 265.0 L434.0 288.0 L466.0 301.0 L483.0 307.0 L526.0 305.0 L552.4 302.6 L556.7 291.0 L554.5 263.0 L552.0 233.4 L550.5 187.0 L554.0 176.0 L560.6 167.0 L571.0 157.0 L583.7 148.3 L598.0 143.5 L612.5 140.5 L636.0 139.0 L655.8 138.8 L687.5 140.5 L699.0 144.0 L710.6 149.7 L742.3 165.6 L779.8 188.7 L797.0 200.0 L804.3 210.3 L810.0 226.0 L797.0 233.0 L756.7 256.4 L725.0 278.0 L756.7 296.8 L808.6 319.9 L823.0 323.3 L824.0 330.0 L823.0 339.0 L817.3 363.0 L811.5 374.0 L802.9 381.6 L794.0 383.3 L771.0 389.0 L756.7 392.6 L745.0 398.0 L720.7 407.0 L699.0 430.0 L655.8 479.0 L621.2 525.3 L593.8 562.8 L586.0 569.0 L579.4 572.9 L526.0 578.6 L466.0 584.5 L414.0 590.0 L380.0 592.2 L373.6 581.5 L350.6 545.5 L324.6 508.0 L301.5 476.2 L286.0 456.0 L272.7 440.2 L261.0 431.0 L249.6 424.3 L238.0 416.5 L226.0 410.0 L220.8 407.0 L216.0 396.0 L203.5 366.0 L194.0 333.0 L189.0 314.0 L186.8 279.5 L189.0 266.0 L194.8 253.5 L203.0 235.0 L212.0 219.0 L223.0 206.0 L233.8 193.0Z"/></clipPath>
<clipPath id="c2"><rect width="951" height="677"/></clipPath>
<radialGradient id="pg" gradientUnits="userSpaceOnUse" cx="496" cy="378" r="340"><stop offset="0" stop-color="#fbfbfb"/><stop offset="0.5" stop-color="#ededed"/><stop offset="1" stop-color="#cccccc"/></radialGradient>
<filter id="pn" x="0" y="0" width="100%" height="100%"><feTurbulence type="fractalNoise" baseFrequency="0.09 0.12" numOctaves="3" seed="7"/><feColorMatrix type="matrix" values="0 0 0 0 0.3  0 0 0 0 0.3  0 0 0 0 0.3  2.2 0 0 0 -0.85"/></filter>
<filter id="bl"><feGaussianBlur stdDeviation="0.45"/></filter>
</defs>
<g clip-path="url(#c2)">
<rect width="951" height="677" fill="#111111"/>
<linearGradient id="cg" x1="0" y1="0" x2="1" y2="0"><stop offset="0" stop-color="#111111"/><stop offset="1" stop-color="#3a3a3a"/></linearGradient><rect x="908" y="0" width="19" height="30" fill="url(#cg)"/>
<rect x="0" y="0" width="24" height="677" fill="#007d00"/><rect x="927" y="0" width="24" height="677" fill="#007d00"/>
<path d="M242.4 187.2 L252.5 188.6 L318.8 226.0 L388.0 265.0 L434.0 288.0 L466.0 301.0 L483.0 307.0 L526.0 305.0 L552.4 302.6 L556.7 291.0 L554.5 263.0 L552.0 233.4 L550.5 187.0 L554.0 176.0 L560.6 167.0 L571.0 157.0 L583.7 148.3 L598.0 143.5 L612.5 140.5 L636.0 139.0 L655.8 138.8 L687.5 140.5 L699.0 144.0 L710.6 149.7 L742.3 165.6 L779.8 188.7 L797.0 200.0 L804.3 210.3 L810.0 226.0 L797.0 233.0 L756.7 256.4 L725.0 278.0 L756.7 296.8 L808.6 319.9 L823.0 323.3 L824.0 330.0 L823.0 339.0 L817.3 363.0 L811.5 374.0 L802.9 381.6 L794.0 383.3 L771.0 389.0 L756.7 392.6 L745.0 398.0 L720.7 407.0 L699.0 430.0 L655.8 479.0 L621.2 525.3 L593.8 562.8 L586.0 569.0 L579.4 572.9 L526.0 578.6 L466.0 584.5 L414.0 590.0 L380.0 592.2 L373.6 581.5 L350.6 545.5 L324.6 508.0 L301.5 476.2 L286.0 456.0 L272.7 440.2 L261.0 431.0 L249.6 424.3 L238.0 416.5 L226.0 410.0 L220.8 407.0 L216.0 396.0 L203.5 366.0 L194.0 333.0 L189.0 314.0 L186.8 279.5 L189.0 266.0 L194.8 253.5 L203.0 235.0 L212.0 219.0 L223.0 206.0 L233.8 193.0Z" fill="url(#pg)"/>
<g clip-path="url(#bc)">
<rect width="951" height="677" filter="url(#pn)" opacity="0.6"/>
<g fill="none" stroke="#888888" stroke-width="3.3" stroke-dasharray="0.1 5.8" stroke-linecap="round" filter="url(#bl)"><circle cx="208" cy="266" r="18"/><circle cx="208" cy="266" r="33"/><circle cx="208" cy="266" r="48"/><circle cx="208" cy="266" r="63"/><circle cx="208" cy="266" r="78"/><circle cx="208" cy="266" r="93"/><circle cx="338" cy="343" r="12"/><circle cx="338" cy="343" r="26"/><circle cx="338" cy="343" r="40"/><circle cx="338" cy="343" r="54"/><circle cx="338" cy="343" r="68"/><circle cx="338" cy="343" r="82"/><circle cx="501" cy="354" r="12"/><circle cx="501" cy="354" r="25"/><circle cx="501" cy="354" r="38"/><circle cx="501" cy="354" r="52"/><circle cx="501" cy="354" r="66"/><circle cx="592" cy="210" r="14"/><circle cx="592" cy="210" r="28"/><circle cx="592" cy="210" r="42"/><circle cx="592" cy="210" r="56"/><circle cx="592" cy="210" r="70"/><circle cx="736" cy="270" r="22"/><circle cx="736" cy="270" r="36"/><circle cx="736" cy="270" r="50"/><circle cx="736" cy="270" r="64"/><circle cx="736" cy="270" r="78"/><circle cx="546" cy="488" r="12"/><circle cx="546" cy="488" r="26"/><circle cx="546" cy="488" r="40"/><circle cx="546" cy="488" r="54"/><circle cx="546" cy="488" r="68"/><circle cx="546" cy="488" r="82"/><circle cx="546" cy="488" r="96"/><circle cx="381" cy="503" r="30"/><circle cx="381" cy="503" r="44"/><circle cx="381" cy="503" r="58"/><circle cx="381" cy="503" r="72"/><circle cx="646" cy="383" r="24"/><circle cx="646" cy="383" r="38"/><circle cx="646" cy="383" r="52"/><circle cx="446" cy="438" r="20"/><circle cx="446" cy="438" r="34"/><circle cx="706" cy="178" r="20"/><circle cx="706" cy="178" r="34"/><circle cx="706" cy="178" r="48"/><circle cx="276" cy="438" r="20"/><circle cx="276" cy="438" r="34"/><circle cx="276" cy="438" r="48"/><circle cx="786" cy="343" r="14"/><circle cx="786" cy="343" r="28"/><circle cx="786" cy="343" r="42"/></g>
</g>
<path d="M242.4 187.2 L252.5 188.6 L318.8 226.0 L388.0 265.0 L434.0 288.0 L466.0 301.0 L483.0 307.0 L526.0 305.0 L552.4 302.6 L556.7 291.0 L554.5 263.0 L552.0 233.4 L550.5 187.0 L554.0 176.0 L560.6 167.0 L571.0 157.0 L583.7 148.3 L598.0 143.5 L612.5 140.5 L636.0 139.0 L655.8 138.8 L687.5 140.5 L699.0 144.0 L710.6 149.7 L742.3 165.6 L779.8 188.7 L797.0 200.0 L804.3 210.3 L810.0 226.0 L797.0 233.0 L756.7 256.4 L725.0 278.0 L756.7 296.8 L808.6 319.9 L823.0 323.3 L824.0 330.0 L823.0 339.0 L817.3 363.0 L811.5 374.0 L802.9 381.6 L794.0 383.3 L771.0 389.0 L756.7 392.6 L745.0 398.0 L720.7 407.0 L699.0 430.0 L655.8 479.0 L621.2 525.3 L593.8 562.8 L586.0 569.0 L579.4 572.9 L526.0 578.6 L466.0 584.5 L414.0 590.0 L380.0 592.2 L373.6 581.5 L350.6 545.5 L324.6 508.0 L301.5 476.2 L286.0 456.0 L272.7 440.2 L261.0 431.0 L249.6 424.3 L238.0 416.5 L226.0 410.0 L220.8 407.0 L216.0 396.0 L203.5 366.0 L194.0 333.0 L189.0 314.0 L186.8 279.5 L189.0 266.0 L194.8 253.5 L203.0 235.0 L212.0 219.0 L223.0 206.0 L233.8 193.0Z" fill="none" stroke="#00f000" stroke-width="1" shape-rendering="crispEdges"/>
<path d="M814.0 222.4 L674.2 222.4 L674.2 361.0" fill="none" stroke="#00ff00" stroke-width="3"/>
<path d="M808.0 216.5 L816.5 222.4 L808.0 228.5 M668.2 356.0 L674.2 364.0 L680.2 356.0" fill="none" stroke="#00ff00" stroke-width="3"/>
<text x="826.5" y="221.5" font-family="Liberation Sans,sans-serif" font-size="10" fill="#35dfe8" text-anchor="middle">X</text>
<text x="673.5" y="376" font-family="Liberation Sans,sans-serif" font-size="10" fill="#35dfe8" text-anchor="middle">Y</text>
</g></svg><!--IMG2E-->
<div class="abs hdr" style="left:954px;width:966px;background:#f3f3f3">
 <div class="sq"></div><div class="t" style="left:21.5px;color:#444;transform-origin:0 50%;transform:scaleX(0.886)">Station 2</div>
 <svg style="left:69px;top:10px" width="824" height="5"><defs><pattern id="dp2" width="4" height="4" patternUnits="userSpaceOnUse"><rect x="0" y="0" width="1" height="1" fill="#555"/><rect x="2" y="2" width="1" height="1" fill="#555"/></pattern></defs><rect width="824" height="5" fill="url(#dp2)"/></svg>
 <svg style="left:926px;top:8px" width="10" height="6" viewBox="0 0 10 6"><path d="M0 0 H10 L5 5.6 Z" fill="#555"/></svg>
 <div class="abs" style="left:950px;top:7px;width:9px;height:8px;border:1px solid #555;border-top-width:2px"></div>
</div>
<div class="abs dd" style="left:954px;width:966px"><div class="t ui" style="letter-spacing:-0.38px">LastRun.EasyOutput.DisplayRecord</div>
 <svg style="left:952px;top:8px" width="9" height="6" viewBox="0 0 9 6" fill="none" stroke="#444" stroke-width="1.1"><path d="M0.4 0.6 L4.5 4.8 L8.6 0.6"/></svg></div>
<div class="abs" style="left:1913px;top:434px;width:2px;height:212px;background:#8c8c8c"></div>
<div class="abs" style="left:1273px;top:887px;width:312px;height:2px;background:#8c8c8c"></div>
<div class="abs" style="left:954px;top:896px;width:966px;height:1px;background:#e4e4e4"></div>
<div class="box" style="left:956px;width:578px"><span class="ui" style="right:2px">@ Raum: (17,7253, 21,2703)</span></div>
<svg style="left:1539px;top:907px" width="6" height="3" viewBox="0 0 6 3"><path d="M0 0 H6 L3 3 Z" fill="#111"/></svg>
<div class="box" style="left:1548px;width:117px"><span class="ui" style="left:1px">Zoom: 141,04 %</span></div>
<div class="box" style="left:1668px;width:128px"><span class="ui" style="left:1px">Wert: 10</span></div>
<div class="lbl ui" style="left:1803px;top:902px;letter-spacing:0.05px">Pan/Zoom fixieren</div>
<div class="abs" style="left:954px;top:917px;width:966px;height:26px;background:#e6e6e6;border-top:1px solid #f8f8f8"></div>
<svg style="left:962px;top:918px" width="190" height="23" viewBox="0 0 190 23"><path d="M3 0 H92 L80 20 Q78.5 22.5 75 22.5 H3 Q0 22.5 0 19.5 V3 Q0 0 3 0Z" fill="#fbfbfb"/><path d="M92 1 H176 L165 19.5 Q163.5 22 160 22 H82 Z" fill="#eeeeee"/></svg>
<div class="abs" style="left:964px;top:920px;width:16px;height:16px;background:#fff;border:1px solid #111"></div>
<div class="abs ui" style="left:982px;top:921px;line-height:14px;color:#1874d2;letter-spacing:0;transform-origin:0 50%;transform:scaleX(0.93)">2D Anzeige</div>
<svg style="left:1053px;top:920px" width="16" height="16" viewBox="0 0 16 16" fill="none" stroke="#111" stroke-width="1.2"><rect x="4.6" y="1.6" width="10.8" height="3.4"/><rect x="4.6" y="6.8" width="10.8" height="3.4"/><rect x="4.6" y="12" width="10.8" height="3.4"/><rect x="0.8" y="7.4" width="2.2" height="2.2"/><rect x="0.8" y="12.6" width="2.2" height="2.2"/><path d="M0.8 5 L3 2.4" /></svg>
<div class="abs ui" style="left:1071.5px;top:921px;line-height:14px;color:#1874d2;letter-spacing:0;transform-origin:0 50%;transform:scaleX(0.94)">Ergebnisse</div>
<div class="abs" style="left:1445px;top:928px;width:113px;height:4px;background:#d0d0d0"></div>
<div class="sb" style="left:1858px"><div class="abs" style="left:6px;top:3px;width:1.5px;height:8px;background:#666"></div></div>
<div class="sb" style="left:1880px"><div class="abs" style="left:3px;top:6px;width:8px;height:2px;background:#555"></div></div>
<div class="sb" style="left:1902px"><svg style="left:3px;top:2px" width="8" height="10" viewBox="0 0 8 10" fill="none" stroke="#555" stroke-width="1"><path d="M0.6 4.4 L4 1 L7.4 4.4 M0.6 8.8 L4 5.4 L7.4 8.8"/></svg></div>
<div class="abs" style="left:954px;top:942px;width:966px;height:6px;background:#e6e6e6;border-top:1px solid #f2f2f2"></div>
<div class="abs" style="left:1436px;top:944px;width:2px;height:2px;background:#666;border-radius:1px"></div>
<div class="abs" style="left:1442px;top:944px;width:2px;height:2px;background:#666;border-radius:1px"></div>
<div class="abs" style="left:1448px;top:944px;width:2px;height:2px;background:#666;border-radius:1px"></div>
<div class="abs film" style="left:954px;width:868px">
 <svg style="left:5px;top:5px" width="854" height="3"><defs><pattern id="fp2" width="10" height="3" patternUnits="userSpaceOnUse"><rect width="4" height="3" fill="#fff"/></pattern></defs><rect width="854" height="3" fill="url(#fp2)"/></svg>
 <svg style="left:5px;top:56px" width="854" height="3"><rect width="854" height="3" fill="url(#fp2)"/></svg>
<div class="th" style="left:5px;background:#1e961e"><svg style="left:5px;top:5px" width="34" height="34" viewBox="0 0 34 34"><rect width="34" height="34" fill="#101010"/><g transform="scale(0.03765 0.05022) translate(-24 0)"><path d="M242.4 187.2 L252.5 188.6 L318.8 226.0 L388.0 265.0 L434.0 288.0 L466.0 301.0 L483.0 307.0 L526.0 305.0 L552.4 302.6 L556.7 291.0 L554.5 263.0 L552.0 233.4 L550.5 187.0 L554.0 176.0 L560.6 167.0 L571.0 157.0 L583.7 148.3 L598.0 143.5 L612.5 140.5 L636.0 139.0 L655.8 138.8 L687.5 140.5 L699.0 144.0 L710.6 149.7 L742.3 165.6 L779.8 188.7 L797.0 200.0 L804.3 210.3 L810.0 226.0 L797.0 233.0 L756.7 256.4 L725.0 278.0 L756.7 296.8 L808.6 319.9 L823.0 323.3 L824.0 330.0 L823.0 339.0 L817.3 363.0 L811.5 374.0 L802.9 381.6 L794.0 383.3 L771.0 389.0 L756.7 392.6 L745.0 398.0 L720.7 407.0 L699.0 430.0 L655.8 479.0 L621.2 525.3 L593.8 562.8 L586.0 569.0 L579.4 572.9 L526.0 578.6 L466.0 584.5 L414.0 590.0 L380.0 592.2 L373.6 581.5 L350.6 545.5 L324.6 508.0 L301.5 476.2 L286.0 456.0 L272.7 440.2 L261.0 431.0 L249.6 424.3 L238.0 416.5 L226.0 410.0 L220.8 407.0 L216.0 396.0 L203.5 366.0 L194.0 333.0 L189.0 314.0 L186.8 279.5 L189.0 266.0 L194.8 253.5 L203.0 235.0 L212.0 219.0 L223.0 206.0 L233.8 193.0Z" fill="#dcdcdc" stroke="#b4b4b4" stroke-width="14"/></g></svg></div>
<div class="th" style="left:54px;background:#2f9a2c"><svg style="left:5px;top:5px" width="34" height="34" viewBox="0 0 34 34"><rect width="34" height="34" fill="#101010"/><g transform="scale(0.03765 0.05022) translate(-24 0)"><path d="M242.4 187.2 L252.5 188.6 L318.8 226.0 L388.0 265.0 L434.0 288.0 L466.0 301.0 L483.0 307.0 L526.0 305.0 L552.4 302.6 L556.7 291.0 L554.5 263.0 L552.0 233.4 L550.5 187.0 L554.0 176.0 L560.6 167.0 L571.0 157.0 L583.7 148.3 L598.0 143.5 L612.5 140.5 L636.0 139.0 L655.8 138.8 L687.5 140.5 L699.0 144.0 L710.6 149.7 L742.3 165.6 L779.8 188.7 L797.0 200.0 L804.3 210.3 L810.0 226.0 L797.0 233.0 L756.7 256.4 L725.0 278.0 L756.7 296.8 L808.6 319.9 L823.0 323.3 L824.0 330.0 L823.0 339.0 L817.3 363.0 L811.5 374.0 L802.9 381.6 L794.0 383.3 L771.0 389.0 L756.7 392.6 L745.0 398.0 L720.7 407.0 L699.0 430.0 L655.8 479.0 L621.2 525.3 L593.8 562.8 L586.0 569.0 L579.4 572.9 L526.0 578.6 L466.0 584.5 L414.0 590.0 L380.0 592.2 L373.6 581.5 L350.6 545.5 L324.6 508.0 L301.5 476.2 L286.0 456.0 L272.7 440.2 L261.0 431.0 L249.6 424.3 L238.0 416.5 L226.0 410.0 L220.8 407.0 L216.0 396.0 L203.5 366.0 L194.0 333.0 L189.0 314.0 L186.8 279.5 L189.0 266.0 L194.8 253.5 L203.0 235.0 L212.0 219.0 L223.0 206.0 L233.8 193.0Z" fill="#dcdcdc" stroke="#b4b4b4" stroke-width="14"/></g></svg></div>
<div class="th" style="left:103px;background:#3c963c"><svg style="left:5px;top:5px" width="34" height="34" viewBox="0 0 34 34"><rect width="34" height="34" fill="#101010"/><g transform="scale(0.03765 0.05022) translate(-24 0)"><path d="M242.4 187.2 L252.5 188.6 L318.8 226.0 L388.0 265.0 L434.0 288.0 L466.0 301.0 L483.0 307.0 L526.0 305.0 L552.4 302.6 L556.7 291.0 L554.5 263.0 L552.0 233.4 L550.5 187.0 L554.0 176.0 L560.6 167.0 L571.0 157.0 L583.7 148.3 L598.0 143.5 L612.5 140.5 L636.0 139.0 L655.8 138.8 L687.5 140.5 L699.0 144.0 L710.6 149.7 L742.3 165.6 L779.8 188.7 L797.0 200.0 L804.3 210.3 L810.0 226.0 L797.0 233.0 L756.7 256.4 L725.0 278.0 L756.7 296.8 L808.6 319.9 L823.0 323.3 L824.0 330.0 L823.0 339.0 L817.3 363.0 L811.5 374.0 L802.9 381.6 L794.0 383.3 L771.0 389.0 L756.7 392.6 L745.0 398.0 L720.7 407.0 L699.0 430.0 L655.8 479.0 L621.2 525.3 L593.8 562.8 L586.0 569.0 L579.4 572.9 L526.0 578.6 L466.0 584.5 L414.0 590.0 L380.0 592.2 L373.6 581.5 L350.6 545.5 L324.6 508.0 L301.5 476.2 L286.0 456.0 L272.7 440.2 L261.0 431.0 L249.6 424.3 L238.0 416.5 L226.0 410.0 L220.8 407.0 L216.0 396.0 L203.5 366.0 L194.0 333.0 L189.0 314.0 L186.8 279.5 L189.0 266.0 L194.8 253.5 L203.0 235.0 L212.0 219.0 L223.0 206.0 L233.8 193.0Z" fill="#dcdcdc" stroke="#b4b4b4" stroke-width="14"/></g></svg></div>
<div class="th" style="left:152px;background:#3c963c"><svg style="left:5px;top:5px" width="34" height="34" viewBox="0 0 34 34"><rect width="34" height="34" fill="#101010"/><g transform="scale(0.03765 0.05022) translate(-24 0)"><path d="M242.4 187.2 L252.5 188.6 L318.8 226.0 L388.0 265.0 L434.0 288.0 L466.0 301.0 L483.0 307.0 L526.0 305.0 L552.4 302.6 L556.7 291.0 L554.5 263.0 L552.0 233.4 L550.5 187.0 L554.0 176.0 L560.6 167.0 L571.0 157.0 L583.7 148.3 L598.0 143.5 L612.5 140.5 L636.0 139.0 L655.8 138.8 L687.5 140.5 L699.0 144.0 L710.6 149.7 L742.3 165.6 L779.8 188.7 L797.0 200.0 L804.3 210.3 L810.0 226.0 L797.0 233.0 L756.7 256.4 L725.0 278.0 L756.7 296.8 L808.6 319.9 L823.0 323.3 L824.0 330.0 L823.0 339.0 L817.3 363.0 L811.5 374.0 L802.9 381.6 L794.0 383.3 L771.0 389.0 L756.7 392.6 L745.0 398.0 L720.7 407.0 L699.0 430.0 L655.8 479.0 L621.2 525.3 L593.8 562.8 L586.0 569.0 L579.4 572.9 L526.0 578.6 L466.0 584.5 L414.0 590.0 L380.0 592.2 L373.6 581.5 L350.6 545.5 L324.6 508.0 L301.5 476.2 L286.0 456.0 L272.7 440.2 L261.0 431.0 L249.6 424.3 L238.0 416.5 L226.0 410.0 L220.8 407.0 L216.0 396.0 L203.5 366.0 L194.0 333.0 L189.0 314.0 L186.8 279.5 L189.0 266.0 L194.8 253.5 L203.0 235.0 L212.0 219.0 L223.0 206.0 L233.8 193.0Z" fill="#dcdcdc" stroke="#b4b4b4" stroke-width="14"/></g></svg></div>
<div class="th" style="left:201px;background:#c83a3a"><svg style="left:5px;top:5px" width="34" height="34" viewBox="0 0 34 34"><rect width="34" height="34" fill="#101010"/><g transform="scale(0.03765 0.05022) translate(-24 0)"><path d="M242.4 187.2 L252.5 188.6 L318.8 226.0 L388.0 265.0 L434.0 288.0 L466.0 301.0 L483.0 307.0 L526.0 305.0 L552.4 302.6 L556.7 291.0 L554.5 263.0 L552.0 233.4 L550.5 187.0 L554.0 176.0 L560.6 167.0 L571.0 157.0 L583.7 148.3 L598.0 143.5 L612.5 140.5 L636.0 139.0 L655.8 138.8 L687.5 140.5 L699.0 144.0 L710.6 149.7 L742.3 165.6 L779.8 188.7 L797.0 200.0 L804.3 210.3 L810.0 226.0 L797.0 233.0 L756.7 256.4 L725.0 278.0 L756.7 296.8 L808.6 319.9 L823.0 323.3 L824.0 330.0 L823.0 339.0 L817.3 363.0 L811.5 374.0 L802.9 381.6 L794.0 383.3 L771.0 389.0 L756.7 392.6 L745.0 398.0 L720.7 407.0 L699.0 430.0 L655.8 479.0 L621.2 525.3 L593.8 562.8 L586.0 569.0 L579.4 572.9 L526.0 578.6 L466.0 584.5 L414.0 590.0 L380.0 592.2 L373.6 581.5 L350.6 545.5 L324.6 508.0 L301.5 476.2 L286.0 456.0 L272.7 440.2 L261.0 431.0 L249.6 424.3 L238.0 416.5 L226.0 410.0 L220.8 407.0 L216.0 396.0 L203.5 366.0 L194.0 333.0 L189.0 314.0 L186.8 279.5 L189.0 266.0 L194.8 253.5 L203.0 235.0 L212.0 219.0 L223.0 206.0 L233.8 193.0Z" fill="#dcdcdc" stroke="#b4b4b4" stroke-width="14"/></g></svg></div>
<div class="th" style="left:250px;background:#3c963c"><svg style="left:5px;top:5px" width="34" height="34" viewBox="0 0 34 34"><rect width="34" height="34" fill="#101010"/><g transform="scale(0.03765 0.05022) translate(-24 0)"><path d="M242.4 187.2 L252.5 188.6 L318.8 226.0 L388.0 265.0 L434.0 288.0 L466.0 301.0 L483.0 307.0 L526.0 305.0 L552.4 302.6 L556.7 291.0 L554.5 263.0 L552.0 233.4 L550.5 187.0 L554.0 176.0 L560.6 167.0 L571.0 157.0 L583.7 148.3 L598.0 143.5 L612.5 140.5 L636.0 139.0 L655.8 138.8 L687.5 140.5 L699.0 144.0 L710.6 149.7 L742.3 165.6 L779.8 188.7 L797.0 200.0 L804.3 210.3 L810.0 226.0 L797.0 233.0 L756.7 256.4 L725.0 278.0 L756.7 296.8 L808.6 319.9 L823.0 323.3 L824.0 330.0 L823.0 339.0 L817.3 363.0 L811.5 374.0 L802.9 381.6 L794.0 383.3 L771.0 389.0 L756.7 392.6 L745.0 398.0 L720.7 407.0 L699.0 430.0 L655.8 479.0 L621.2 525.3 L593.8 562.8 L586.0 569.0 L579.4 572.9 L526.0 578.6 L466.0 584.5 L414.0 590.0 L380.0 592.2 L373.6 581.5 L350.6 545.5 L324.6 508.0 L301.5 476.2 L286.0 456.0 L272.7 440.2 L261.0 431.0 L249.6 424.3 L238.0 416.5 L226.0 410.0 L220.8 407.0 L216.0 396.0 L203.5 366.0 L194.0 333.0 L189.0 314.0 L186.8 279.5 L189.0 266.0 L194.8 253.5 L203.0 235.0 L212.0 219.0 L223.0 206.0 L233.8 193.0Z" fill="#dcdcdc" stroke="#b4b4b4" stroke-width="14"/></g></svg></div>
</div>
<div class="btn" style="left:1824px;top:949px"><svg style="left:19px;top:7px" width="10" height="16" viewBox="0 0 10 16" fill="none" stroke="#6d6d6d" stroke-width="1.6"><path d="M9 1 L1.5 8 L9 15"/></svg></div>
<div class="btn" style="left:1874px;top:949px"><svg style="left:19px;top:7px" width="10" height="16" viewBox="0 0 10 16" fill="none" stroke="#6d6d6d" stroke-width="1.6"><path d="M1 1 L8.5 8 L1 15"/></svg></div>
<div class="btn" style="left:1824px;top:981px"><svg style="left:16px;top:6px" width="15" height="17" viewBox="0 0 15 17" fill="none" stroke="#777" stroke-width="1" stroke-linejoin="round"><path d="M1.4 2.6 Q1.4 0.6 3.4 1.4 L13 7 Q14.6 8.4 13 9.8 L3.4 15.6 Q1.4 16.4 1.4 14.4 Z"/></svg></div>
<div class="btn" style="left:1874px;top:981px;border-color:#c9c9c9;box-shadow:0 0 0 1px #fafafa"><svg style="left:17px;top:6px" width="13" height="16" viewBox="0 0 13 16"><rect x="4" y="0.4" width="5" height="2" fill="none" stroke="#bdbdbd" stroke-width="0.8"/><rect x="0.4" y="2.2" width="12.2" height="2.2" rx="0.8" fill="#b4b4b4"/><path d="M1.6 5.2 H11.4 V15 Q11.4 15.6 10.8 15.6 H2.2 Q1.6 15.6 1.6 15 Z" fill="#bcbcbc"/><path d="M4 6 V14.6 M6.5 6 V14.6 M9 6 V14.6" stroke="#d8d8d8" stroke-width="0.9"/></svg></div>

<div class="abs" style="left:0;top:1012px;width:1920px;height:28px;background:#f0f0f0"></div>
<svg style="left:3px;top:1020px" width="16" height="16" viewBox="0 0 16 16" fill="none" stroke="#111" stroke-width="1.2"><circle cx="7.6" cy="4.2" r="3.1"/><path d="M0.9 15.2 C0.9 10.8 3.8 8.6 7.2 8.6 C8.6 8.6 9.8 9 10.6 9.6"/><path d="M0.9 15.2 H6"/><rect x="11.2" y="12" width="4" height="3.6" rx="0.8"/><path d="M11 13.8 H6.4 M7.8 13.8 V15.2 M13.4 13.5v.6"/></svg>
<div class="abs ui" style="left:21px;top:1020px;line-height:15px;font-size:12.5px;letter-spacing:-0.05px">Administrator</div>
<div class="abs" style="left:100px;top:1017px;width:100px;height:22px;background:#00b027;border:1px solid #bcbcbc"></div>
<svg style="left:202px;top:1024px" width="16" height="8" viewBox="0 0 16 8"><rect x="0.2" y="0.6" width="15.6" height="6.4" rx="0.8" fill="#111"/><rect x="2.4" y="2.6" width="11" height="2.2" fill="#fff"/></svg>
<div class="abs ui" style="left:222px;top:1020px;line-height:15px;letter-spacing:-0.42px">1314MB/4391MB</div>
<svg style="left:316px;top:1020px" width="16" height="16" viewBox="0 0 16 16" fill="none" stroke="#111" stroke-width="1.2"><rect x="5.6" y="0.8" width="4.8" height="4.4"/><rect x="0.8" y="10.8" width="4.8" height="4.4"/><rect x="10.4" y="10.8" width="4.8" height="4.4"/><path d="M8 5.2 V8 M3.2 10.8 V8 H12.8 V10.8"/></svg>
<div class="abs ui" style="left:335px;top:1020px;line-height:15px;letter-spacing:-0.3px">OK</div>
<svg style="left:357px;top:1021px" width="16" height="14" viewBox="0 0 16 14" fill="none" stroke="#111" stroke-width="1.1"><path d="M1.6 13.2 C0.8 13.2 0.6 12.8 0.6 12 V4.6 C0.6 3.6 1.2 3 2.2 3 H3.6 L5 0.8 H11 L12.4 3 H13.8 C14.8 3 15.4 3.6 15.4 4.6 V12 C15.4 12.8 15.2 13.2 14.4 13.2 Z"/><circle cx="8" cy="8" r="4"/><path d="M3.2 12 V5.4 C3.2 4.6 3.8 4.2 4.4 4.2 M12.8 12 V5.4 C12.8 4.6 12.2 4.2 11.6 4.2" stroke-width="0.9"/></svg>
<div class="abs ui" style="left:376px;top:1020px;line-height:15px">2</div>

</body>
</html>
